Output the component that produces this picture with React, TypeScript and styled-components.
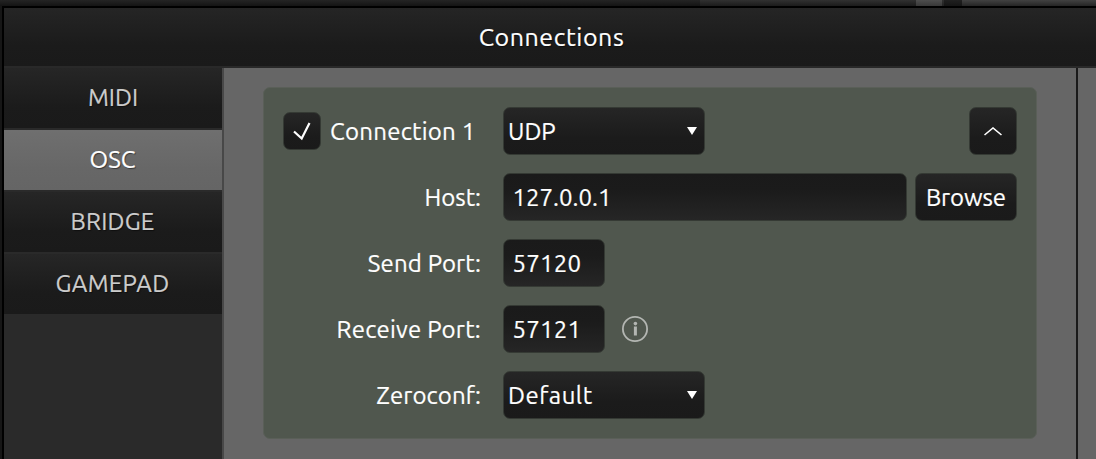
import React from "react";
import styled, { createGlobalStyle } from "styled-components";

const GlobalStyle = createGlobalStyle`
  * { box-sizing: border-box; }
  body { margin: 0; background: #161616; overflow: hidden; }
  #root {
    font-family: Ubuntu, "Open Sans", "Noto Sans", sans-serif;
    font-size: 24px;
    color: #fff;
    -webkit-text-stroke: 0.2px currentColor;
  }
`;

const raised = "linear-gradient(#262626, #1b1b1b 65%, #1a1a1a)";
const sunken = "linear-gradient(#1a1a1a, #1b1b1b 35%, #262626)";

const Screen = styled.div`
  display: flex;
  flex-direction: column;
  width: 1096px;
  height: 459px;
  padding-left: 2px;
  background: #161616;
`;

const Toolbar = styled.div`
  display: flex;
  flex: none;
  height: 6px;
  margin-left: -2px;
  background: linear-gradient(#232323, #141414);
`;
const ToolbarSegment = styled.div<{ $width?: number; $from: string; $to: string }>`
  ${(p) => (p.$width ? `width: ${p.$width}px;` : "flex: 1;")}
  background: linear-gradient(${(p) => p.$from}, ${(p) => p.$to});
`;

const Dialog = styled.section`
  display: flex;
  flex: 1;
  min-height: 0;
  flex-direction: column;
  border: solid #000;
  border-width: 2px 0 0 2px;
`;

const TitleBar = styled.header`
  display: flex;
  flex: none;
  justify-content: center;
  height: 60px;
  padding-left: 3px;
  border-bottom: 2px solid #292929;
  background: linear-gradient(#252525, #1b1b1b 65%, #1a1a1a);
  font-size: 25px;
  line-height: 59px;
  letter-spacing: 0.55px;
  text-shadow: 1px 1px 1px #0008;
`;

const Body = styled.div`
  display: flex;
  flex: 1;
  min-height: 0;
`;

const Sidebar = styled.nav`
  width: 220px;
  flex: none;
  border-right: 2px solid #484848;
  background: #2a2a2a;
`;

const Tab = styled.div<{ $active?: boolean; $spacing?: number }>`
  height: 62px;
  border-bottom: 2px solid #2a2a2a;
  background: ${(p) => (p.$active ? "linear-gradient(#6f6f6f, #676767 65%, #656565)" : raised)};
  color: ${(p) => (p.$active ? "#fff" : "#ccc")};
  line-height: 59px;
  text-align: center;
  letter-spacing: ${(p) => p.$spacing ?? 0}px;
  text-shadow: 1px 1px 1px #0007;

  &:not(:first-child) {
    padding-right: 1px;
  }
`;

const Content = styled.main`
  width: 854px;
  flex: none;
  padding: 19px 39px 0;
  border-right: 2px solid #1a1a1a;
  background: #666;
`;

const Gutter = styled.aside`
  flex: 1;
  background: #666;
`;

const Card = styled.div`
  display: flex;
  flex-direction: column;
  gap: 18px;
  width: 774px;
  height: 352px;
  padding: 19px;
  border: 1px solid #5a5f58;
  border-radius: 7px;
  background: #50574e;
`;

const Row = styled.div`
  display: flex;
  align-items: center;
  height: 48px;
`;

const Label = styled.label<{ $spacing?: number }>`
  display: flex;
  align-items: center;
  justify-content: flex-end;
  width: 199px;
  height: 48px;
  padding-right: 1px;
  margin-right: 21px;
  line-height: 46px;
  white-space: pre;
  letter-spacing: ${(p) => p.$spacing ?? 0}px;
`;

const ConnectionToggle = styled(Label)`
  justify-content: flex-start;
  gap: 9px;
`;

const Control = styled.div<{ $width: number }>`
  display: flex;
  flex: none;
  align-items: center;
  width: ${(p) => p.$width}px;
  height: 48px;
  border: 1px solid #353a34;
  border-radius: 7px;
  background: ${raised} border-box;
  line-height: 46px;
`;

const Text = styled.span`
  padding-top: 2px;
`;

const Checkbox = styled(Control)`
  height: 38px;
  justify-content: center;
`;

const Field = styled(Control)<{ $spacing?: number }>`
  padding-left: 8.5px;
  background: ${sunken} border-box;
  letter-spacing: ${(p) => p.$spacing ?? 0}px;
`;

const Select = styled(Control)<{ $spacing?: number }>`
  justify-content: space-between;
  padding: 0 7px 0 4px;
  letter-spacing: ${(p) => p.$spacing ?? 0}px;
`;

const Button = styled(Control)<{ $spacing?: number }>`
  justify-content: center;
  margin-left: 8px;
  letter-spacing: ${(p) => p.$spacing ?? 0}px;
`;

const CollapseButton = styled(Button)`
  margin-left: auto;
`;

const InfoIcon = styled.svg`
  margin-left: 17px;
  overflow: visible;
`;

const Arrow = () => (
  <svg width="10" height="8" viewBox="0 0 10 8">
    <path d="M0 0H10L5 8Z" fill="#fff" />
  </svg>
);

const Check = () => (
  <svg width="18" height="20" viewBox="0 0 18 20" fill="none" stroke="#fff" strokeWidth="2.2">
    <path d="M1 10.5L8.7 17.5L16.5 2" />
  </svg>
);

const Chevron = () => (
  <svg width="18" height="9" viewBox="0 0 18 9" fill="none" stroke="#fff" strokeWidth="1.6">
    <path d="M0.5 8L9 1L17.5 8" />
  </svg>
);

export default function App() {
  return (
    <>
      <GlobalStyle />
      <Screen>
        <Toolbar>
          <ToolbarSegment $width={700} $from="#242424" $to="#141414" />
          <ToolbarSegment $width={216} $from="#303030" $to="#1b1b1b" />
          <ToolbarSegment $width={26} $from="#4d4d4d" $to="#383838" />
          <ToolbarSegment $width={2} $from="#303030" $to="#222" />
          <ToolbarSegment $width={18} $from="#202020" $to="#151515" />
          <ToolbarSegment $from="#414141" $to="#252525" />
        </Toolbar>
        <Dialog>
          <TitleBar>Connections</TitleBar>
          <Body>
            <Sidebar>
              <Tab>MIDI</Tab>
              <Tab $active>OSC</Tab>
              <Tab $spacing={0.2}>BRIDGE</Tab>
              <Tab $spacing={0.3}>GAMEPAD</Tab>
            </Sidebar>
            <Content>
              <Card>
                <Row>
                  <ConnectionToggle $spacing={0.25}>
                    <Checkbox $width={38}>
                      <Check />
                    </Checkbox>
                    <Text>Connection 1</Text>
                  </ConnectionToggle>
                  <Select $width={202}>
                    <Text>UDP</Text>
                    <Arrow />
                  </Select>
                  <CollapseButton $width={48}>
                    <Chevron />
                  </CollapseButton>
                </Row>
                <Row>
                  <Label>
                    <Text>Host:</Text>
                  </Label>
                  <Field $width={404}>
                    <Text>127.0.0.1</Text>
                  </Field>
                  <Button $width={102} $spacing={-0.1}>
                    <Text>Browse</Text>
                  </Button>
                </Row>
                <Row>
                  <Label $spacing={0.15}>
                    <Text>Send Port:</Text>
                  </Label>
                  <Field $width={102} $spacing={0.2}>
                    <Text>57120</Text>
                  </Field>
                </Row>
                <Row>
                  <Label $spacing={0.25}>
                    <Text>Receive Port:</Text>
                  </Label>
                  <Field $width={102} $spacing={0.2}>
                    <Text>57121</Text>
                  </Field>
                  <InfoIcon width="26" height="26" viewBox="0 0 26 26">
                    <circle cx="13" cy="13" r="12.1" fill="none" stroke="#b3b6b2" strokeWidth="1.8" />
                    <circle cx="13.4" cy="7.6" r="1.8" fill="#b3b6b2" />
                    <path d="M11.9 10.5H14.9V19.5H11.9Z" fill="#b3b6b2" />
                  </InfoIcon>
                </Row>
                <Row>
                  <Label $spacing={0.1}>
                    <Text>Zeroconf:</Text>
                  </Label>
                  <Select $width={202} $spacing={0.5}>
                    <Text>Default</Text>
                    <Arrow />
                  </Select>
                </Row>
              </Card>
            </Content>
            <Gutter />
          </Body>
        </Dialog>
      </Screen>
    </>
  );
}
